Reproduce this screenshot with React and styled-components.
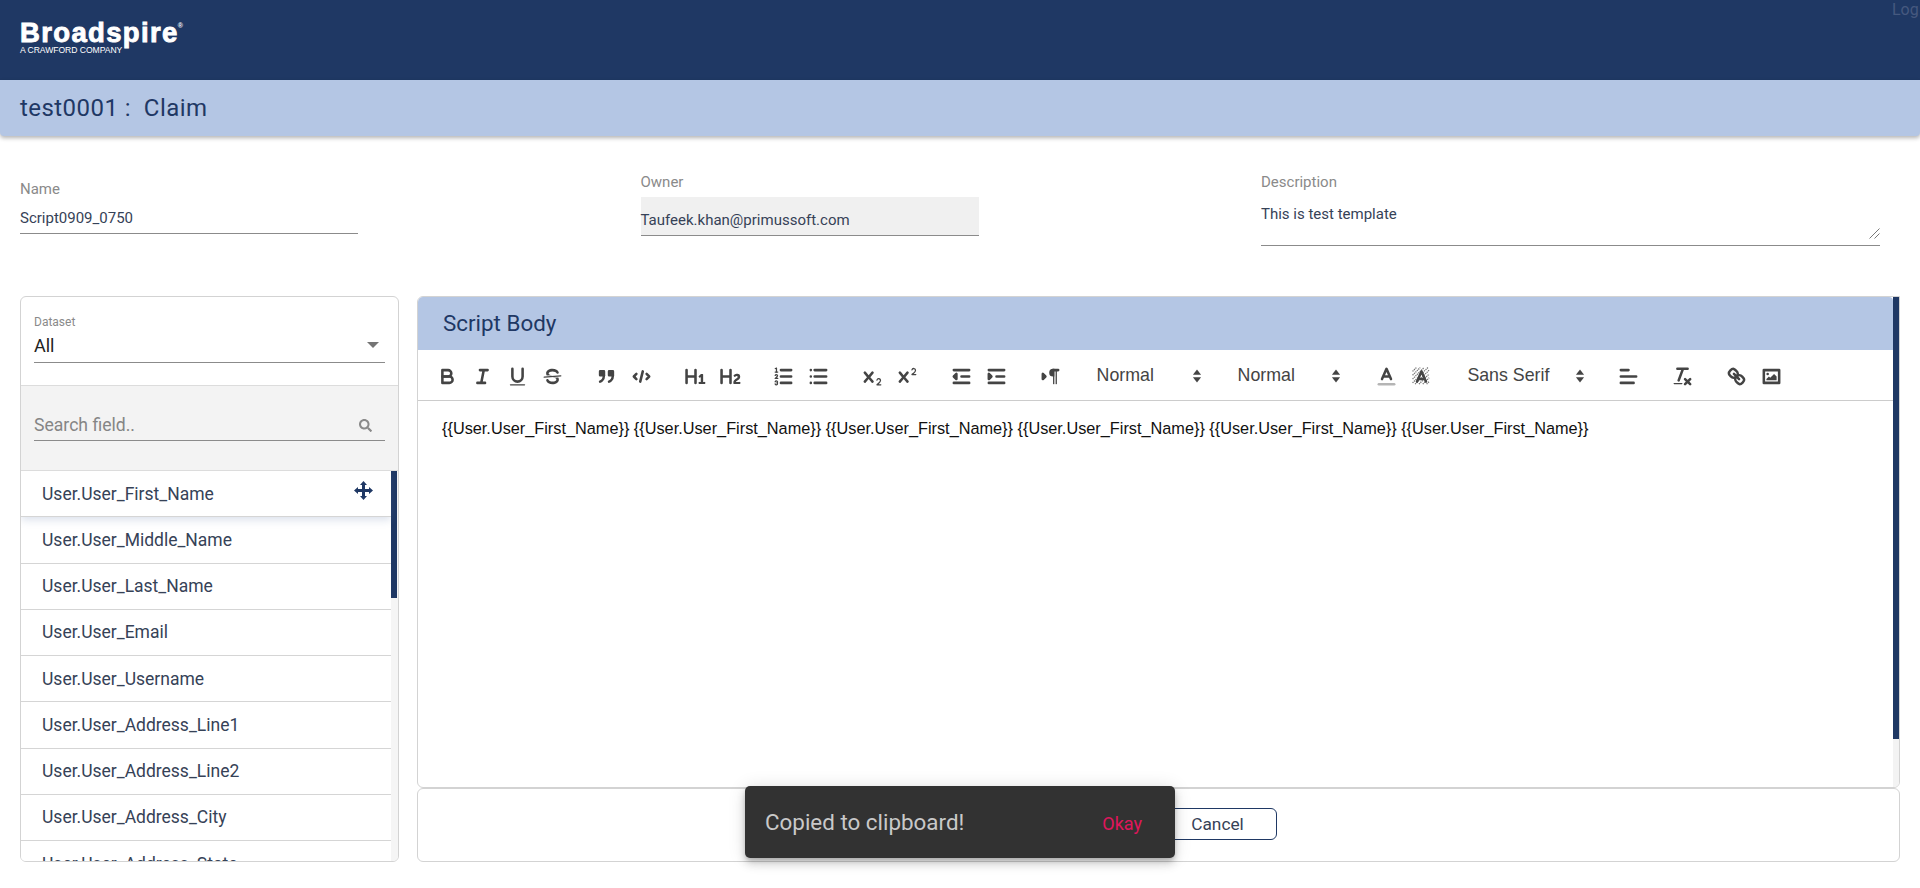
import React from "react";
import styled, { createGlobalStyle } from "styled-components";
import { FaSearch } from "react-icons/fa";

const navy = "#1f3864";
const text = "#364257";
const ink = "#444";

const fields = [
  "User.User_First_Name",
  "User.User_Middle_Name",
  "User.User_Last_Name",
  "User.User_Email",
  "User.User_Username",
  "User.User_Address_Line1",
  "User.User_Address_Line2",
  "User.User_Address_City",
  "User.User_Address_State",
];

const Global = createGlobalStyle`
  html, body { margin: 0; padding: 0; background: #fff; overflow: hidden; }
  body { font-family: Roboto, "Liberation Sans", sans-serif; color: ${text}; }
  * { box-sizing: border-box; }
`;

const Page = styled.div`
  width: 1920px;
  height: 888px;
  overflow: hidden;
  position: relative;
`;

const TopBar = styled.header`
  height: 80px;
  background: ${navy};
  display: flex;
  justify-content: space-between;
  padding: 20px 0 0 20px;
`;

const Logo = styled.div`
  color: #fff;
  display: flex;
  flex-direction: column;
`;

const LogoMark = styled.div`
  font-family: "Liberation Sans", sans-serif;
  font-weight: 700;
  font-size: 27.5px;
  line-height: 26px;
  letter-spacing: 1.35px;
  -webkit-text-stroke: 0.9px #fff;
  sup { font-size: 7px; line-height: 0; vertical-align: 14px; letter-spacing: 0; margin-left: -1px; -webkit-text-stroke: 0; }
`;

const LogoSub = styled.div`
  font-family: "Liberation Sans", sans-serif;
  font-size: 8.6px;
  line-height: 9px;
  letter-spacing: -0.05px;
`;

const Logout = styled.div`
  width: 28px;
  margin-top: -19px;
  font-size: 16px;
  line-height: 18px;
  color: #46597f;
`;

const TitleBar = styled.div`
  height: 56px;
  background: #b4c6e4;
  padding: 0 20px;
  display: flex;
  align-items: center;
  font-size: 24px;
  letter-spacing: 0.45px;
  white-space: pre;
  color: ${navy};
  border-radius: 0 0 4px 4px;
  box-shadow: 0 2px 4px rgba(0, 0, 0, 0.3);
`;

const MetaRow = styled.section`
  display: grid;
  grid-template-columns: 338px 338px 619px;
  column-gap: 282.5px;
  margin-left: 20px;
  height: 160px;
`;

const Field = styled.div`
  padding-top: ${(p) => p.$top}px;
`;

const FieldLabel = styled.div`
  font-size: 15px;
  line-height: 16px;
  color: #8a8a8a;
`;

const FieldValue = styled.div`
  margin-top: ${(p) => p.$gap}px;
  height: ${(p) => p.$h}px;
  font-size: 15px;
  line-height: 20px;
  padding-top: ${(p) => p.$pad}px;
  color: ${text};
  border-bottom: 1px solid #8b8b8b;
  background: ${(p) => (p.$readonly ? "#f0f0f0" : "transparent")};
  position: relative;
`;

const Grip = styled.svg`
  position: absolute;
  right: 0;
  bottom: 6px;
`;

const Columns = styled.main`
  display: grid;
  grid-template-columns: 379px 1483px;
  column-gap: 18px;
  padding-left: 20px;
`;

const Side = styled.aside`
  height: 566px;
  border: 1px solid #d3d3d3;
  border-radius: 6px;
  overflow: hidden;
  display: flex;
  flex-direction: column;
`;

const DatasetBox = styled.div`
  height: 89px;
  flex: none;
  padding: 18px 13px 0 13px;
  border-bottom: 1px solid #dcdcdc;
`;

const SmallLabel = styled.div`
  font-size: 12px;
  line-height: 14px;
  color: #8a8a8a;
`;

const SelectRow = styled.div`
  margin-top: 3px;
  height: 31px;
  display: flex;
  align-items: center;
  justify-content: space-between;
  font-size: 18px;
  color: #222;
  border-bottom: 1px solid #8b8b8b;
  padding: 0 6px 4px 0;
`;

const Caret = styled.span`
  width: 0;
  height: 0;
  border-left: 6px solid transparent;
  border-right: 6px solid transparent;
  border-top: 6px solid #757575;
`;

const SearchBox = styled.div`
  height: 85px;
  flex: none;
  background: #f3f3f3;
  border-bottom: 1px solid #dcdcdc;
  padding: 22px 13px 0 13px;
`;

const SearchRow = styled.div`
  height: 33px;
  display: flex;
  align-items: center;
  justify-content: space-between;
  font-size: 17.6px;
  color: #858585;
  border-bottom: 1px solid #8b8b8b;
  padding: 2px 13px 0 0;
  svg { color: #8a8a8a; }
`;

const ListWrap = styled.div`
  flex: 1;
  min-height: 0;
  position: relative;
  overflow: hidden;
  padding-right: 7px;
  background: #f5f5f5;
`;

const Thumb = styled.div`
  position: absolute;
  top: 0;
  right: 1px;
  width: 6px;
  height: 127px;
  background: ${navy};
`;

const FieldRow = styled.div`
  height: 46.25px;
  background: #fff;
  display: flex;
  align-items: center;
  justify-content: space-between;
  padding: 0 18px 0 21px;
  font-size: 17.5px;
  color: ${text};
  border-bottom: 1px solid #d5d5d5;
  box-shadow: ${(p) => (p.$active ? "0 3px 8px rgba(90, 120, 170, 0.22)" : "none")};
  position: relative;
  z-index: ${(p) => (p.$active ? 1 : 0)};
`;

const MoveIcon = styled.svg`
  margin-top: -6px;
`;

const Right = styled.div`
  display: flex;
  flex-direction: column;
`;

const EditorCard = styled.section`
  height: 492px;
  border: 1px solid #d3d3d3;
  border-radius: 6px 0 6px 6px;
  overflow: hidden;
  display: flex;
  flex-direction: column;
  position: relative;
  padding-right: 6px;
`;

const EditorTrack = styled.div`
  position: absolute;
  top: 0;
  right: 0;
  bottom: 0;
  width: 6px;
  background: #f3f3f3;
`;

const EditorThumb = styled.div`
  height: 442px;
  background: ${navy};
`;

const CardHead = styled.div`
  height: 53px;
  flex: none;
  background: #b4c6e4;
  border-radius: 4px 4px 0 0;
  display: flex;
  align-items: center;
  padding: 0 0 2px 25px;
  font-size: 22.4px;
  color: ${navy};
`;

const Toolbar = styled.div`
  height: 51px;
  flex: none;
  display: flex;
  align-items: center;
  padding: 2px 0 0 12px;
  border-bottom: 1px solid #ccc;
  font-family: "Liberation Sans", sans-serif;
  color: ${ink};
`;

const Tool = styled.span`
  width: 35px;
  height: 24px;
  flex: none;
  margin-right: ${(p) => (p.$end ? 18.8 : 0)}px;
  display: flex;
  align-items: center;
  justify-content: center;
  svg {
    width: 23px;
    height: 23px;
    fill: none;
    stroke: ${ink};
    stroke-width: 2;
    stroke-linecap: round;
    stroke-linejoin: round;
  }
`;

const Picker = styled.span`
  width: ${(p) => p.$w}px;
  flex: none;
  padding: 0 ${(p) => p.$right}px 2px 10px;
  margin-right: ${(p) => (p.$end ? 18.8 : 0)}px;
  font-size: 17.8px;
  display: flex;
  align-items: center;
  justify-content: space-between;
  svg { fill: ${ink}; margin-top: 2px; }
`;

const EditorBody = styled.div`
  padding: 16px 24px;
  font-family: "Liberation Sans", sans-serif;
  font-size: 16.3px;
  line-height: 22px;
  color: #111;
`;

const Footer = styled.div`
  height: 74px;
  border: 1px solid #d3d3d3;
  border-radius: 6px;
  display: flex;
  align-items: center;
  padding: 0 0 2px 740px;
`;

const CancelBtn = styled.button`
  width: 119px;
  height: 32px;
  background: #fff;
  border: 1px solid ${navy};
  border-radius: 6px;
  color: ${text};
  font-family: Roboto, sans-serif;
  font-size: 17.3px;
  padding: 0;
`;

const Snack = styled.div`
  position: absolute;
  left: 745px;
  top: 786px;
  width: 430px;
  height: 72px;
  background: #323232;
  border-radius: 5px;
  display: flex;
  align-items: center;
  justify-content: space-between;
  padding: 0 33px 0 20px;
  font-size: 22.4px;
  color: #c9c9c9;
  box-shadow: 0 3px 5px -1px rgba(0, 0, 0, 0.2), 0 6px 10px rgba(0, 0, 0, 0.14), 0 1px 18px rgba(0, 0, 0, 0.12);
`;

const SnackAction = styled.span`
  font-size: 18px;
  color: #e0165c;
  margin-top: 3px;
`;

const fillInk = { fill: ink, stroke: "none" };

const Ic = ({ children }) => <svg viewBox="0 0 18 18">{children}</svg>;

const UpDown = () => (
  <svg width="10" height="14" viewBox="0 0 8 13">
    <path d="M4 .5 7.800 5.300H.2Z" />
    <path d="M4 12.500 .2 7.700H7.800Z" />
  </svg>
);

const Move = () => (
  <MoveIcon width="19" height="19" viewBox="0 0 19 19" fill={navy}>
    <path d="M9.500 0 13 4H11V8H15V6L19 9.500 15 13V11H11V15H13L9.500 19 6 15H8V11H4V13L0 9.500 4 6V8H8V4H6Z" />
  </MoveIcon>
);

const BODY_TOKEN = "{{User.User_First_Name}}";

export default function App() {
  return (
    <Page>
      <Global />
      <TopBar>
        <Logo>
          <LogoMark>Broadspire<sup>®</sup></LogoMark>
          <LogoSub>A CRAWFORD COMPANY</LogoSub>
        </Logo>
        <Logout>Log</Logout>
      </TopBar>
      <TitleBar>test0001 :  Claim</TitleBar>

      <MetaRow>
        <Field $top={45}>
          <FieldLabel>Name</FieldLabel>
          <FieldValue $gap={4} $h={33} $pad={7}>Script0909_0750</FieldValue>
        </Field>
        <Field $top={38}>
          <FieldLabel>Owner</FieldLabel>
          <FieldValue $gap={7} $h={39} $pad={13} $readonly>Taufeek.khan@primussoft.com</FieldValue>
        </Field>
        <Field $top={38}>
          <FieldLabel>Description</FieldLabel>
          <FieldValue $gap={7} $h={49} $pad={7}>
            This is test template
            <Grip width="11" height="11" viewBox="0 0 11 11">
              <path d="M.5 10.500 10.500.5M5.500 10.500 10.500 5.500" stroke="#555" fill="none" strokeWidth="0.8" />
            </Grip>
          </FieldValue>
        </Field>
      </MetaRow>

      <Columns>
        <Side>
          <DatasetBox>
            <SmallLabel>Dataset</SmallLabel>
            <SelectRow>All<Caret /></SelectRow>
          </DatasetBox>
          <SearchBox>
            <SearchRow>Search field..<FaSearch size={13} /></SearchRow>
          </SearchBox>
          <ListWrap>
            {fields.map((f, i) => (
              <FieldRow key={f} $active={i === 0}>
                {f}
                {i === 0 && <Move />}
              </FieldRow>
            ))}
            <Thumb />
          </ListWrap>
        </Side>

        <Right>
          <EditorCard>
            <CardHead>Script Body</CardHead>
            <Toolbar>
              <Tool><Ic><path d="M5 4H9.500A2.500 2.500 0 0 1 12 6.500A2.500 2.500 0 0 1 9.500 9H5V4Z" /><path d="M5 9h5.500A2.500 2.500 0 0 1 13 11.500A2.500 2.500 0 0 1 10.500 14H5V9Z" /></Ic></Tool>
              <Tool><Ic><path d="M7 4h6M5 14h6M8 14l2-10" /></Ic></Tool>
              <Tool><Ic><path d="M5 3V9a4 4 0 0 0 4 4h0a4 4 0 0 0 4-4V3" /><rect x="3" y="15" width="12" height="1" rx=".5" {...fillInk} /></Ic></Tool>
              <Tool $end><Ic><path d="M15.500 8.500 2.500 9.500" strokeWidth="1" /><path {...fillInk} d="M9 8C6.500 7.800 6 7.500 6 6.500 6 5.800 7.300 5 9 5c1.600 0 2.800.7 3 1.300a1 1 0 0 0 1.900-.6C13.400 4.100 11.400 3 9 3 6.200 3 4 4.500 4 6.500a3.200 3.200 0 0 0 .5 1.800Z" /><path {...fillInk} d="M9 10C11.500 10.200 12 10.500 12 11.500c0 .7-1.300 1.500-3 1.500-1.600 0-2.800-.7-3-1.300a1 1 0 1 0-1.900.6C4.600 13.900 6.600 15 9 15c2.800 0 5-1.500 5-3.500a3.200 3.200 0 0 0-.5-1.800Z" /></Ic></Tool>

              <Tool><Ic><rect x="4" y="5" width="3" height="3" fill={ink} /><rect x="11" y="5" width="3" height="3" fill={ink} /><path d="M7 8c0 4-3 5-3 5M14 8c0 4-3 5-3 5" /></Ic></Tool>
              <Tool $end><Ic><path d="M5 7 3 9l2 2M13 7l2 2-2 2M10 5 8 13" /></Ic></Tool>

              <Tool><Ic><path {...fillInk} d="M10 4V14a1 1 0 0 1-2 0V10H3v4a1 1 0 0 1-2 0V4A1 1 0 0 1 3 4V8H8V4a1 1 0 0 1 2 0Zm6.070 9.210H14.990V7.600a.54.54 0 0 0-.6-.6h-.63a1 1 0 0 0-.75.3L11.650 8.570a.54.54 0 0 0-.02.86l.29.31a.54.54 0 0 0 .85.03l.1-.09a1.200 1.200 0 0 0 .24-.35h.02s-.01.31-.01.6v3.280H12.040a.54.54 0 0 0-.6.6v.44a.54.54 0 0 0 .6.6h4.030a.54.54 0 0 0 .6-.6v-.44A.54.54 0 0 0 16.070 13.210Z" /></Ic></Tool>
              <Tool $end><Ic><path {...fillInk} d="M16.740 13.810v.44a.54.54 0 0 1-.6.6H11.860a.58.58 0 0 1-.65-.6V14.010c0-2.900 3.400-3.420 3.400-4.550a.78.78 0 0 0-.85-.78 1.180 1.180 0 0 0-.84.38c-.27.26-.56.37-.86.13l-.43-.34c-.31-.24-.39-.52-.15-.81a2.970 2.970 0 0 1 2.450-1.180 2.450 2.450 0 0 1 2.680 2.410c0 2.450-3.180 2.930-3.280 3.940h2.790A.54.54 0 0 1 16.740 13.810ZM9 3A1 1 0 0 0 8 4V8H3V4A1 1 0 0 0 1 4V14a1 1 0 0 0 2 0V10H8v4a1 1 0 0 0 2 0V4A1 1 0 0 0 9 3Z" /></Ic></Tool>

              <Tool><Ic><path d="M7 4h8M7 9h8M7 14h8" /><path d="M2.500 5.500h2" strokeWidth="1" /><path {...fillInk} d="M3.500 6A.5.5 0 0 1 3 5.500V3.090l-.28.13A.5.5 0 0 1 2.050 3c-.12-.25-.02-.32.22-.45l1-.5A.5.5 0 0 1 4 2.500v3A.5.5 0 0 1 3.500 6Z" /><path d="M4.500 10.500h-2c0-.23 1.850-1.080 1.850-2.230A.96.96 0 0 0 2.500 8.160M2.500 14.850a.96.96 0 0 0 1.850-.11A.7.7 0 0 0 3.750 14a.69.69 0 0 0 .6-.74.96.96 0 0 0-1.850-.11" strokeWidth="1" /></Ic></Tool>
              <Tool $end><Ic><path d="M6 4h9M6 9h9M6 14h9M3 4h0M3 9h0M3 14h0" /></Ic></Tool>

              <Tool><Ic><path {...fillInk} d="M15.500 15H13.860a3.860 3.860 0 0 0 1.910-2.980 1.800 1.800 0 0 0-1.600-1.750A1.920 1.920 0 0 0 12.020 11.700a.5.5 0 1 0 .96.29.91.91 0 0 1 1.050-.72.81.81 0 0 1 .74.76c0 1.080-1.170 1.870-1.940 2.430A1.460 1.460 0 0 0 12 15.500a.5.5 0 0 0 .5.5h3a.5.5 0 0 0 0-1Z" /><path {...fillInk} d="M9.650 5.240a1 1 0 0 0-1.410.11L6 7.960 3.760 5.350A1 1 0 0 0 2.240 6.650L4.680 9.500 2.240 12.350A1 1 0 0 0 3.760 13.650L6 11.040l2.240 2.610a1 1 0 1 0 1.520-1.300L7.320 9.500 9.760 6.650A1 1 0 0 0 9.650 5.240Z" /></Ic></Tool>
              <Tool $end><Ic><path {...fillInk} d="M15.500 7H13.860a4 4 0 0 0 1.910-2.980 1.800 1.800 0 0 0-1.600-1.750A1.920 1.920 0 0 0 12.020 3.700a.5.5 0 1 0 .96.29.92.92 0 0 1 1.050-.72.81.81 0 0 1 .74.76c0 1.080-1.160 1.920-1.930 2.490A1.420 1.420 0 0 0 12 7.500a.5.5 0 0 0 .5.5h3a.5.5 0 0 0 0-1Z" /><path {...fillInk} d="M9.650 5.240a1 1 0 0 0-1.410.11L6 7.960 3.760 5.350A1 1 0 0 0 2.240 6.650L4.680 9.500 2.240 12.350A1 1 0 0 0 3.760 13.650L6 11.040l2.240 2.610a1 1 0 1 0 1.520-1.300L7.320 9.500 9.760 6.650A1 1 0 0 0 9.650 5.240Z" /></Ic></Tool>

              <Tool><Ic><path d="M3 14h12M3 4h12M9 9h6" /><path d="M5 7v4L3 9Z" fill={ink} /></Ic></Tool>
              <Tool $end><Ic><path d="M3 14h12M3 4h12M9 9h6" /><path d="M3 7v4l2-2Z" fill={ink} /></Ic></Tool>

              <Tool $end><Ic><path d="M3 11l2-2-2-2Z" fill={ink} /><path d="M15 4h-4" /><path {...fillInk} d="M11 3a3 3 0 0 0 0 6h1V3Z" /><rect x="11" y="4" width="1" height="11" {...fillInk} /><rect x="13" y="4" width="1" height="11" {...fillInk} /></Ic></Tool>

              <Picker $w={141} $right={26}>Normal<UpDown /></Picker>
              <Picker $w={141} $right={28}>Normal<UpDown /></Picker>

              <Tool><Ic><path d="M3 15h12" stroke="#b5b5b5" /><path d="M5.500 11 9 3l3.500 8M11.630 9H6.380" /></Ic></Tool>
              <Tool $end><Ic><path d="M2 5 5 2M2 8 8 2M2 11 11 2M2 14 14 2M4 15 15 4M7 15l8-8M10 15l5-5M13 15l2-2" stroke="#777" strokeWidth="1" strokeDasharray="1 .6" strokeLinecap="butt" /><path d="M5.500 13 9 5l3.500 8M11.630 11H6.380" /></Ic></Tool>

              <Picker $w={135} $right={7} $end>Sans Serif<UpDown /></Picker>

              <Tool $end><Ic><path d="M3 9h12M3 14h10M3 4h6" /></Ic></Tool>
              <Tool $end><Ic><path d="M5 3h8M6 12 9.350 3M11 11l4 4M15 11l-4 4" /><rect x="2" y="14" width="7" height="1" rx=".5" {...fillInk} /></Ic></Tool>

              <Tool><Ic><path d="M7 7l4 4" /><path d="M8.900 4.580a3.480 3.480 0 0 1 .36 4.680A3.480 3.480 0 0 1 4.580 8.900C3.190 7.500 2.040 6.400 4.220 4.220S7.500 3.190 8.900 4.580Z" /><path d="M13.420 9.100a3.480 3.480 0 0 0-4.680-.36 3.480 3.480 0 0 0 .36 4.680c1.390 1.390 2.500 2.540 4.680.36S14.820 10.500 13.420 9.100Z" /></Ic></Tool>
              <Tool><Ic><rect x="3" y="4" width="12" height="10" /><circle cx="6" cy="7" r="1" {...fillInk} /><path {...fillInk} d="M5 12V11L7 9l1 1 3-3 2 2v3Z" /></Ic></Tool>
            </Toolbar>
            <EditorBody>
              {Array(6).fill(BODY_TOKEN).join(" ")}
            </EditorBody>
            <EditorTrack><EditorThumb /></EditorTrack>
          </EditorCard>
          <Footer><CancelBtn>Cancel</CancelBtn></Footer>
        </Right>
      </Columns>

      <Snack>Copied to clipboard!<SnackAction>Okay</SnackAction></Snack>
    </Page>
  );
}
